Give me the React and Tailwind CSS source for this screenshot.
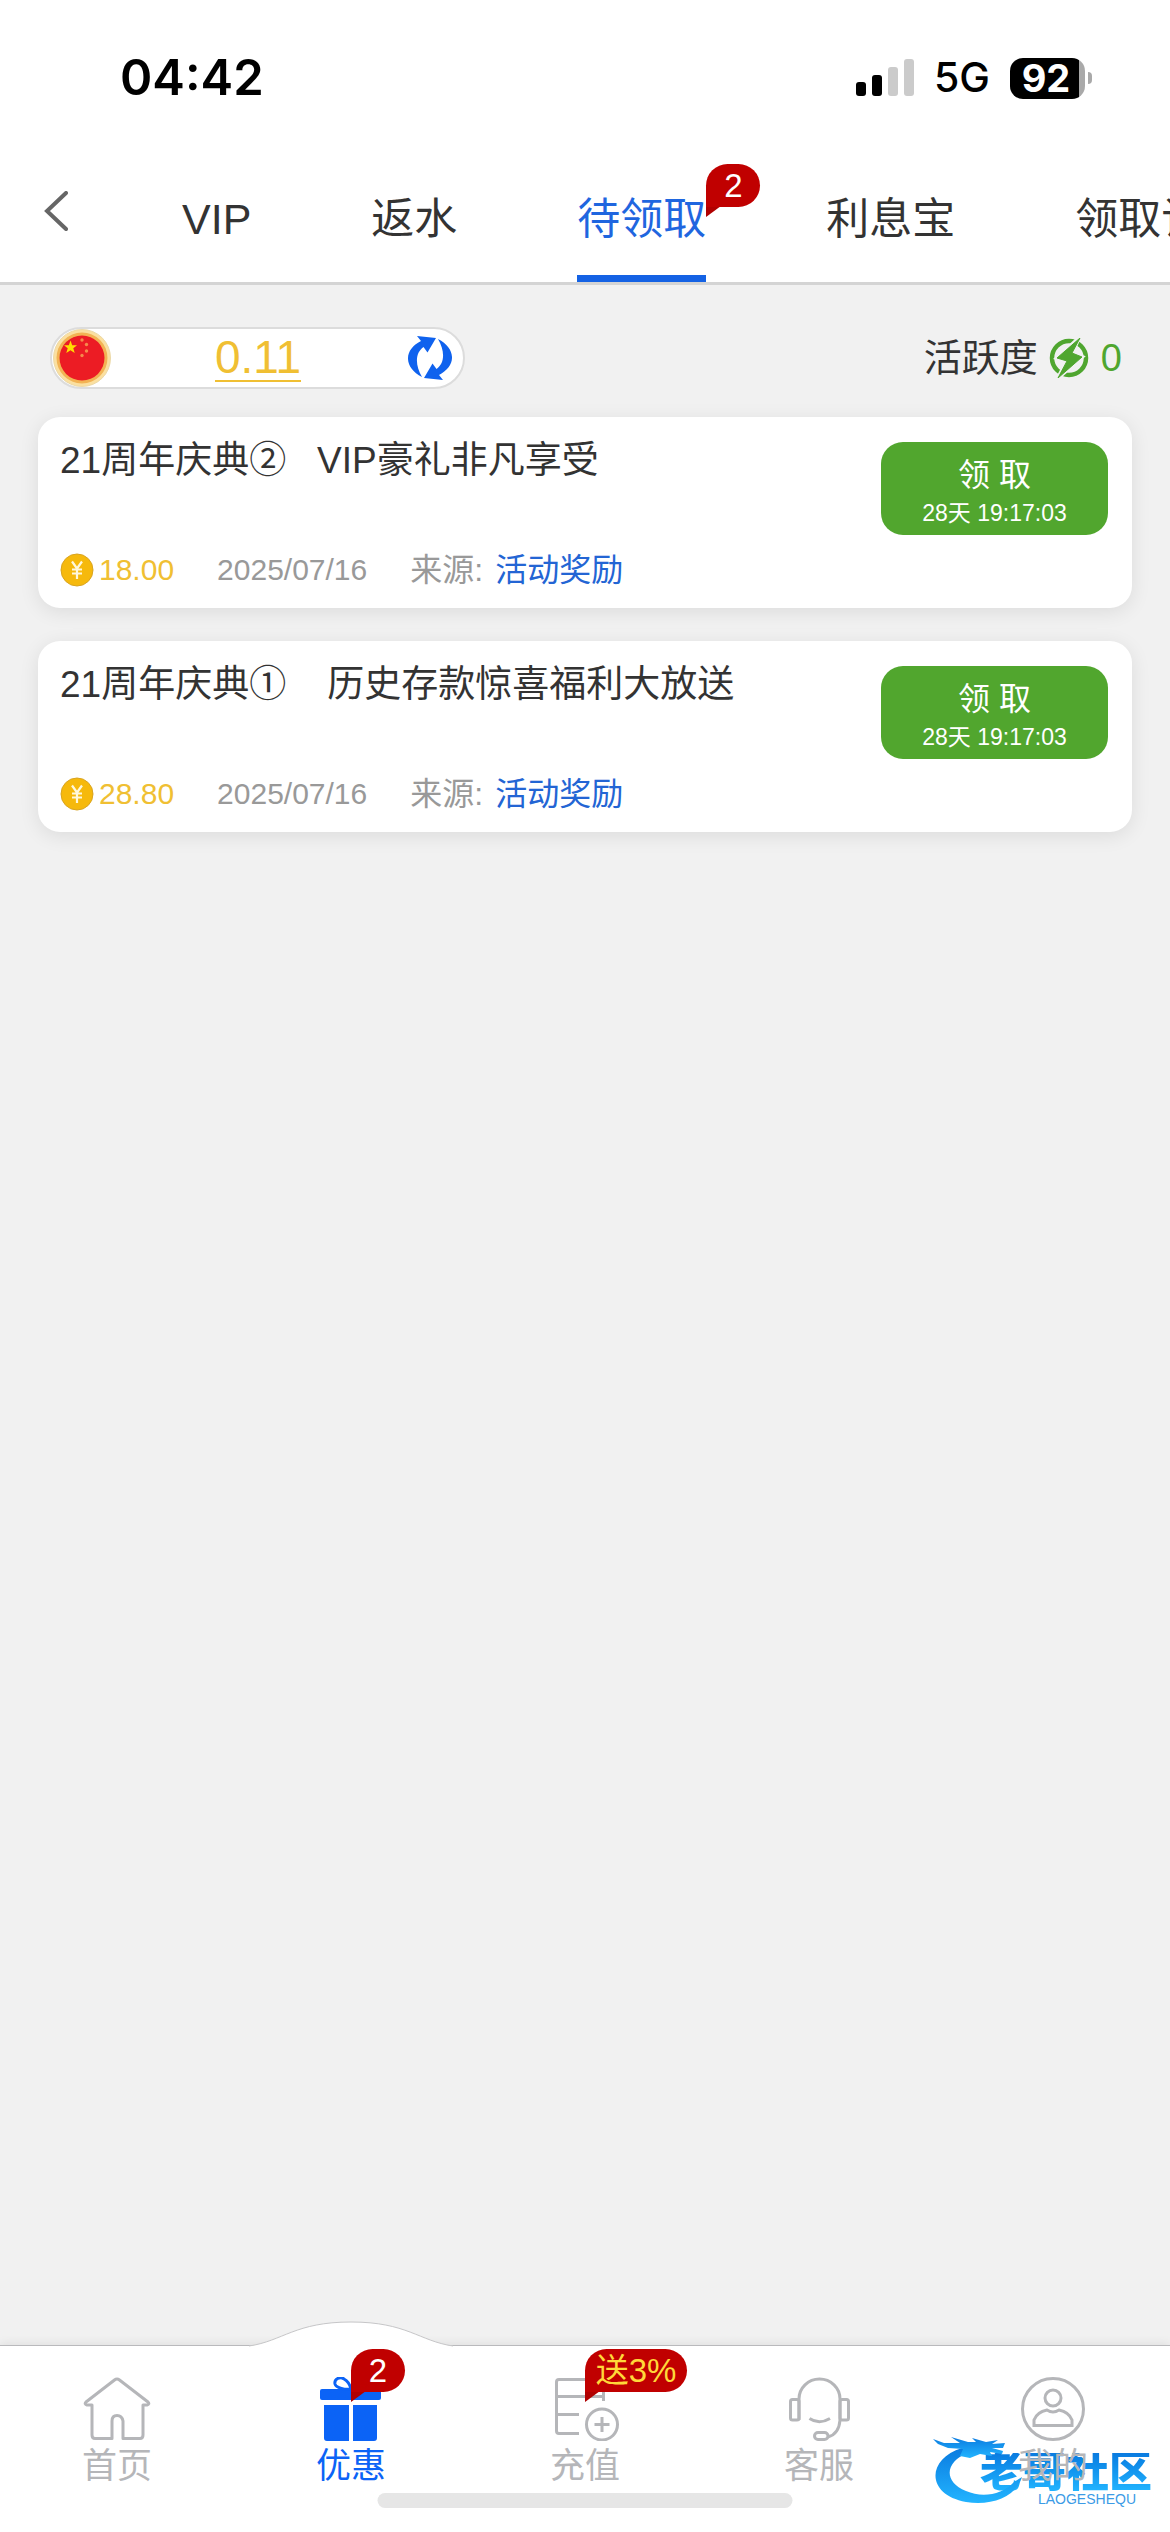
import React, { useState } from "react";
import clsx from "clsx";

const tabs = [
  { id: "vip", label: "VIP" },
  { id: "rebate", label: "返水" },
  { id: "pending", label: "待领取", badge: "2" },
  { id: "interest", label: "利息宝" },
  { id: "history", label: "领取记录" },
];

const rewards = [
  {
    id: 1,
    title: "21周年庆典②   VIP豪礼非凡享受",
    amount: "18.00",
    date: "2025/07/16",
    source: "活动奖励",
    countdown: "28天 19:17:03",
  },
  {
    id: 2,
    title: "21周年庆典①    历史存款惊喜福利大放送",
    amount: "28.80",
    date: "2025/07/16",
    source: "活动奖励",
    countdown: "28天 19:17:03",
  },
];

const HomeIcon = () => (
  <svg viewBox="0 0 68 64" className="w-[68px] h-16" fill="none" stroke="currentColor" strokeWidth="3" strokeLinejoin="round">
    <path d="M9 28V58Q9 61.500 12 61.500H29V44Q29 38.500 34 38.500T40 44V61.500H57Q60 61.500 60 58V28H64Q67 27 65 25L36.500 3Q34 1 31.500 3L3 25Q1 27 4 28Z" />
  </svg>
);

const GiftIcon = () => (
  <svg viewBox="0 0 68 64" className="w-[68px] h-16" fill="currentColor">
    <rect x="3" y="12" width="61" height="11" rx="2" />
    <path d="M7 28H32V64H10Q7 64 7 61ZM36 28H60V61Q60 64 57 64H36Z" />
    <path d="M33 12C29 13 19 11 18 7C17 2 23 -1 27 2C31 4 33 8 34 12C35 8 38 4 42 2C46 -1 52 2 51 7C50 11 39 13 35 12" fill="none" stroke="currentColor" strokeWidth="3" />
  </svg>
);

const RechargeIcon = () => (
  <svg viewBox="0 0 68 64" className="w-[68px] h-16" fill="none" stroke="currentColor" strokeWidth="3">
    <path d="M28 56.500H8Q5.500 56.500 5.500 54V5Q5.500 2.500 8 2.500H49Q52.500 2.500 52.500 5V24M5.500 19.500H52.500M5.500 37.500H28" />
    <circle cx="51" cy="47.500" r="15.500" />
    <path d="M51 40V55M43.500 47.500H58.500" />
  </svg>
);

const SupportIcon = () => (
  <svg viewBox="0 0 68 64" className="w-[68px] h-16" fill="none" stroke="currentColor" strokeWidth="3">
    <path d="M14 43V22A20.500 20 0 0 1 55 22V43Q54 57 43 60" />
    <rect x="5.500" y="22.500" width="8.500" height="20.500" rx="2" />
    <rect x="55" y="22.500" width="8.500" height="20.500" rx="2" />
    <path d="M24.500 41.500Q34 48 45 41.500" />
    <rect x="29.500" y="55.500" width="13.500" height="7" rx="3.500" />
  </svg>
);

const ProfileIcon = () => (
  <svg viewBox="0 0 68 64" className="w-[68px] h-16" fill="none" stroke="currentColor" strokeWidth="3">
    <circle cx="34" cy="32" r="30.500" />
    <circle cx="34" cy="21" r="8" />
    <path d="M15 48.500V43Q18 35 28 33Q34 37 40 33Q50 35 53 43V48.500Z" />
  </svg>
);

const CoinIcon = () => (
  <svg viewBox="0 0 34 34" className="w-[34px] h-[34px]">
    <circle cx="17" cy="17" r="16" fill="#f6b90c" stroke="#d9a420" strokeWidth="1" />
    <path d="M12 8.500L17 15.500L22 8.500M17 15.500V26M12 16.500H22M12 20.500H22" fill="none" stroke="#fff8dd" strokeWidth="2.200" />
  </svg>
);

const FlagIcon = () => (
  <svg viewBox="0 0 60 60" className="w-[60px] h-[60px]">
    <circle cx="30" cy="30" r="28.500" fill="#fbe0a0" stroke="#ecd9a8" strokeWidth="1" />
    <circle cx="30" cy="30" r="25.500" fill="#f2b354" />
    <circle cx="30" cy="30" r="22.500" fill="#ec1c24" />
    <path d="M18.500 12.500L20.200 17.200H25L21.300 20.200L22.700 25L18.500 22.200L14.300 25L15.700 20.200L12 17.200H16.800Z" fill="#ffde00" />
    <g fill="#f58a4b">
      <circle cx="30" cy="12" r="1.700" />
      <circle cx="34.500" cy="16.500" r="1.700" />
      <circle cx="34.500" cy="23" r="1.700" />
      <circle cx="30" cy="27.500" r="1.700" />
    </g>
  </svg>
);

const RefreshIcon = () => (
  <svg viewBox="0 0 44 46" className="w-11 h-[46px]" fill="#0f62ee">
    <path d="M9 1L28 3L19.500 17.500L15.500 12C7 18 7 30 14 42C-4 33 -5 15 13 6Z" />
    <path d="M9 1L28 3L19.500 17.500L15.500 12C7 18 7 30 14 42C-4 33 -5 15 13 6Z" transform="rotate(180 22 23)" />
  </svg>
);

const EnergyIcon = () => (
  <svg viewBox="0 0 40 40" className="w-10 h-10">
    <circle cx="20" cy="20" r="17" fill="none" stroke="#4fa62f" strokeWidth="4.500" />
    <path d="M30 0L8 20L18 23L9 40L33 19L23 15Z" fill="#4fa62f" stroke="#f1f1f1" strokeWidth="4" />
    <path d="M31 0L8 20L18 23L9 40L33 19L23 15Z" fill="#4fa62f" stroke="#4fa62f" strokeWidth="1" />
  </svg>
);

const Badge = ({ children, className }) => (
  <span
    className={clsx(
      "absolute flex h-[43px] items-center justify-center whitespace-nowrap rounded-[22px] rounded-bl-none bg-[#c00000]",
      className
    )}
  >
    {children}
    <svg viewBox="0 0 15 10" className="absolute left-0 top-full h-[10px] w-[15px]" fill="#b00000">
      <path d="M0 -1H15L0 10Z" />
    </svg>
  </span>
);

const StatusBar = () => (
  <div className="flex h-[156px] items-center justify-between pl-[120px] pr-[78px] font-['Inter',sans-serif] text-black">
    <span className="text-[49px] font-semibold">04:42</span>
    <div className="flex items-center">
      <svg viewBox="0 0 58 38" className="mr-5 h-[38px] w-[58px]">
        <rect x="0" y="23" width="10" height="14" rx="3" />
        <rect x="16" y="16" width="10" height="21" rx="3" />
        <rect x="32" y="8" width="10" height="29" rx="3" fill="#cbcbcb" />
        <rect x="48" y="0" width="10" height="37" rx="3" fill="#cbcbcb" />
      </svg>
      <span className="mr-5 text-[41px] font-medium">5G</span>
      <div className="flex h-[41px] w-[75px] items-center justify-center rounded-[13px] bg-linear-to-r from-black from-92% to-[#a9a9a9] to-92% pr-[3px] text-[38px] font-bold leading-[41px] text-white">
        92
      </div>
      <span className="ml-[3px] h-3 w-1 rounded-r-full bg-[#a9a9a9]" />
    </div>
  </div>
);

const RewardCard = ({ reward }) => (
  <li className="flex justify-between rounded-[22px] bg-white pb-[21px] pl-[22px] pr-6 pt-[25px] shadow-[0_4px_20px_rgba(0,0,0,0.09)]">
    <div className="flex h-[145px] flex-col justify-between">
      <h2 className="whitespace-pre text-[37px] leading-[38px] text-[#333]">{reward.title}</h2>
      <div className="flex items-center text-[30px] leading-[34px] text-[#999]">
        <CoinIcon />
        <span className="ml-[5px] text-[#f0bf33]">{reward.amount}</span>
        <span className="ml-[43px]">{reward.date}</span>
        <span className="ml-[43px] text-[32px]">来源:</span>
        <a href="#source" className="ml-3 text-[32px] text-[#2365d4]">
          {reward.source}
        </a>
      </div>
    </div>
    <button
      type="button"
      className="flex h-[93px] w-[227px] flex-col items-center rounded-[22px] bg-[#51a62e] pt-[14px] text-white"
    >
      <span className="text-[32px] leading-[38px]">领 取</span>
      <span className="text-[23px] leading-[38px]">{reward.countdown}</span>
    </button>
  </li>
);

const Watermark = () => (
  <div className="absolute right-[14px] top-[89px] h-[72px] w-[224px]">
    <svg viewBox="0 0 224 72" className="absolute inset-0 h-full w-full">
      <defs>
        <linearGradient id="dragon" x1="0" y1="0" x2="0" y2="1">
          <stop offset="0" stopColor="#0a7be0" />
          <stop offset="1" stopColor="#22b4ff" />
        </linearGradient>
      </defs>
      <g fill="url(#dragon)">
        <path d="M30 13C-6 24 -6 60 34 67C60 71 84 62 90 42L82 47C70 60 50 63 34 56C10 46 14 26 36 18Z" />
        <path d="M1 4L12 8L28 8L19 2L36 7L44 7L40 3L54 7L66 5L60 9L73 8L71 13L60 13L71 16L70 19L58 17L60 21L48 19L38 23L28 21L31 14L16 13L6 9Z" />
      </g>
    </svg>
    <div className="flex h-full flex-col items-end justify-end">
      <span className="bg-linear-to-b from-[#0a7be0] to-[#22b4ff] bg-clip-text pr-1 text-[43px] font-black leading-[38px] text-transparent">
        老哥社区
      </span>
      <span className="pr-5 text-[14px] leading-[16px] text-[#3b9be6]">LAOGESHEQU</span>
    </div>
  </div>
);

const navItems = [
  { id: "home", label: "首页", Icon: HomeIcon },
  { id: "promo", label: "优惠", Icon: GiftIcon, badge: "2" },
  { id: "recharge", label: "充值", Icon: RechargeIcon, badge: "送3%" },
  { id: "support", label: "客服", Icon: SupportIcon },
  { id: "me", label: "我的", Icon: ProfileIcon },
];

const BottomNav = () => (
  <nav className="relative h-[187px] border-t border-[#b9b9bc] bg-white shadow-[0_-3px_8px_rgba(0,0,0,0.06)]">
    <Watermark />
    <ul className="relative grid grid-cols-5">
      {navItems.map(({ id, label, Icon, badge }) => (
        <li key={id} className="relative flex justify-center">
          {id === "promo" && (
            <svg viewBox="0 0 204 28" className="absolute -top-[25px] h-7 w-[204px]">
              <path d="M0 25C34 20 46 1 102 1S170 20 204 25V28H0Z" fill="#fff" />
              <path d="M0 25C34 20 46 1 102 1S170 20 204 25" fill="none" stroke="#c6c6c8" />
            </svg>
          )}
          <a
            href={`#${id}`}
            className={clsx(
              "relative flex flex-col items-center pt-[31px]",
              id === "promo" ? "text-[#0b63f6]" : "text-[#b5b6b9]"
            )}
          >
            <Icon />
            <span className="text-[35px] leading-[50px]">{label}</span>
            {badge && (
              <Badge
                className={clsx(
                  "left-[35px] top-[3px]",
                  badge === "2" ? "w-[54px] text-[33px] text-white" : "w-[102px] text-[33px] text-[#ffd83a]"
                )}
              >
                {badge}
              </Badge>
            )}
          </a>
        </li>
      ))}
    </ul>
    <div className="absolute bottom-6 left-1/2 h-[15px] w-[415px] -translate-x-1/2 rounded-full bg-[#e6e6e6]" />
  </nav>
);

const App = () => {
  const [activeTab, setActiveTab] = useState("pending");

  return (
    <div className="flex min-h-screen flex-col bg-[#f1f1f1] font-['Liberation_Sans','Noto_Sans_CJK_SC',sans-serif]">
      <header className="border-b-[3px] border-[#d4d4d4] bg-white">
        <StatusBar />
        <div className="flex h-[126px] overflow-hidden">
          <button type="button" aria-label="返回" className="w-[182px] shrink-0 pb-4 pl-11">
            <svg viewBox="0 0 24 40" className="h-10 w-6" fill="none" stroke="#666" strokeWidth="4" strokeLinecap="round">
              <path d="M22 2L3 20L22 38" />
            </svg>
          </button>
          <nav className="flex gap-[120px]">
            {tabs.map((tab) => (
              <button
                key={tab.id}
                type="button"
                onClick={() => setActiveTab(tab.id)}
                className={clsx(
                  "relative shrink-0 whitespace-nowrap border-b-[7px] pt-[7px] text-[43px]",
                  tab.id === activeTab ? "border-[#1462e4] text-[#1f66df]" : "border-transparent text-[#333]"
                )}
              >
                {tab.label}
                {tab.badge && <Badge className="left-full top-2 w-[54px] text-[33px] text-white">{tab.badge}</Badge>}
              </button>
            ))}
          </nav>
        </div>
      </header>

      <main className="flex-1 px-[38px] pt-[42px]">
        <div className="flex items-center justify-between pl-3 pr-[10px]">
          <div className="flex h-[62px] w-[415px] items-center justify-between rounded-full border-2 border-[#dcdcdc] bg-white pr-[11px]">
            <FlagIcon />
            <a
              href="#balance"
              className="mr-1 border-b-2 border-[#f0bf33] text-[46px] leading-[46px] text-[#f0bf33]"
            >
              0.11
            </a>
            <button type="button" aria-label="刷新">
              <RefreshIcon />
            </button>
          </div>
          <div className="flex items-center text-[38px] text-[#333]">
            活跃度
            <span className="ml-[11px] mr-3">
              <EnergyIcon />
            </span>
            <span className="text-[#4fa62f]">0</span>
          </div>
        </div>

        <ul className="mt-7 flex flex-col gap-[33px]">
          {rewards.map((reward) => (
            <RewardCard key={reward.id} reward={reward} />
          ))}
        </ul>
      </main>

      <BottomNav />
    </div>
  );
};

export default App;
